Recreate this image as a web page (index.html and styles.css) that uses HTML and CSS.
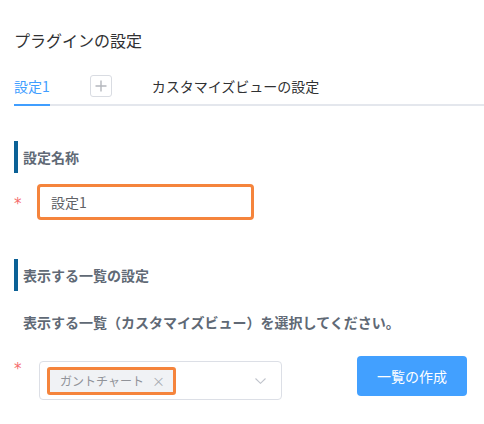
FILE: index.html
```html
<!DOCTYPE html>
<html lang="ja">
<head>
<meta charset="utf-8">
<link rel="stylesheet" href="styles.css">
</head>
<body>
<div class="page">
  <h1 class="title">プラグインの設定</h1>
  <div class="tabs">
    <div class="tab active">設定1</div>
    <div class="tab-add">
      <svg width="12" height="12" viewBox="0 0 12 12"><path d="M6 0.5V11.5M0.5 6H11.5" stroke="#b4b7bd" stroke-width="1.4" fill="none"/></svg>
    </div>
    <div class="tab">カスタマイズビューの設定</div>
  </div>

  <h2 class="section first">設定名称</h2>
  <div class="row">
    <span class="req">*</span>
    <div class="input">設定1</div>
  </div>

  <h2 class="section second">表示する一覧の設定</h2>
  <p class="desc">表示する一覧（カスタマイズビュー）を選択してください。</p>
  <div class="row row-select">
    <span class="req req-top">*</span>
    <div class="select">
      <span class="tag">ガントチャート<span class="tag-x">×</span></span>
      <svg class="chev" width="11" height="6" viewBox="0 0 11 6"><path d="M0.5 0.5L5.5 5.3L10.5 0.5" stroke="#c0c4cc" stroke-width="1.1" fill="none"/></svg>
    </div>
    <button class="btn">一覧の作成</button>
  </div>
</div>
</body>
</html>
```

FILE: styles.css
```css
html, body {
  margin: 0;
  padding: 0;
  background: #ffffff;
}
body {
  font-family: "Noto Sans CJK JP", "Noto Sans", sans-serif;
  color: #333333;
}
.page {
  padding: 28px 0 0 14px;
}
.title {
  margin: 0;
  font-size: 16px;
  font-weight: 400;
  line-height: 24px;
  color: #303133;
}
.tabs {
  margin-top: 16px;
  height: 36px;
  display: flex;
  align-items: center;
  gap: 40px;
  border-bottom: 2px solid #e4e7ed;
}
.tab {
  font-size: 14px;
  line-height: 36px;
  color: #303133;
  position: relative;
}
.tab.active {
  color: #409eff;
}
.tab.active::after {
  content: "";
  position: absolute;
  left: 0;
  right: 0;
  bottom: -2px;
  height: 2px;
  background: #409eff;
}
.tab-add {
  width: 20px;
  height: 20px;
  border: 1px solid #d9dce2;
  border-radius: 3px;
  display: flex;
  align-items: center;
  justify-content: center;
}
.section {
  margin: 0;
  height: 32px;
  line-height: 32px;
  border-left: 4px solid #0b6196;
  padding-left: 5px;
  font-size: 14px;
  font-weight: 700;
  color: #606975;
}
.section.first {
  margin-top: 35px;
}
.section.second {
  margin-top: 39px;
}
.row {
  display: flex;
  align-items: center;
  margin-top: 11px;
}
.req {
  width: 23px;
  padding-left: 0;
  box-sizing: border-box;
  color: #f56c6c;
  font-family: "DejaVu Sans", sans-serif;
  font-size: 15px;
  line-height: 18px;
  padding-top: 4px;
}
.input {
  width: 217px;
  height: 36px;
  box-sizing: border-box;
  border: 3px solid #f5843c;
  border-radius: 4px;
  padding-left: 11px;
  font-size: 14px;
  line-height: 30px;
  color: #606266;
}
.desc {
  margin: 19px 0 0;
  padding-left: 9px;
  font-size: 14px;
  font-weight: 700;
  line-height: 24px;
  color: #606975;
}
.row-select {
  align-items: flex-start;
  margin-top: 22px;
}
.req-top {
  padding-top: 4px;
}
.select {
  margin-left: 2px;
  margin-top: 5px;
  width: 243px;
  height: 39px;
  box-sizing: border-box;
  border: 1px solid #dcdfe6;
  border-radius: 4px;
  display: flex;
  align-items: center;
  justify-content: space-between;
  padding: 0 15px 0 7px;
}
.tag {
  height: 28px;
  box-sizing: border-box;
  border: 3px solid #f5843c;
  border-radius: 3px;
  background: #f0f2f5;
  padding: 0 8px 0 10px;
  font-size: 12px;
  line-height: 22px;
  color: #909399;
  display: inline-flex;
  align-items: center;
}
.tag-x {
  margin-left: 8px;
  font-size: 13px;
  color: #a8abb2;
}
.chev {
  display: block;
}
.btn {
  margin-left: 75px;
  width: 110px;
  height: 40px;
  border: none;
  border-radius: 4px;
  background: #42a0ff;
  color: #ffffff;
  font-family: "Noto Sans CJK JP", "Noto Sans", sans-serif;
  font-size: 14px;
  padding: 0;
}
```
